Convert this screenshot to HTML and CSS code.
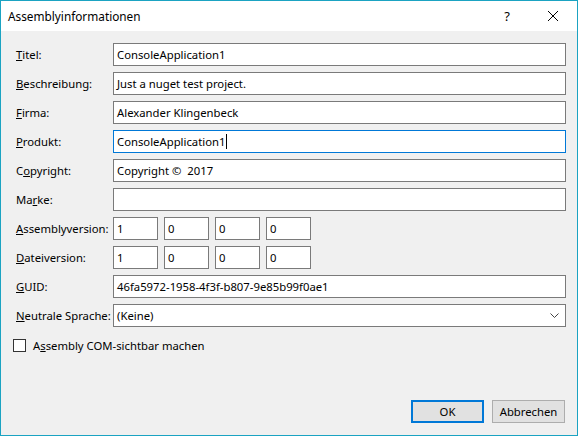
FILE: index.html
```html
<!DOCTYPE html>
<html>
<head>
<meta charset="utf-8">
<link rel="stylesheet" href="styles.css">
</head>
<body>
<div class="window">
  <div class="titlebar">
    <span class="title">Assemblyinformationen</span>
    <span class="tb-btn help">?</span>
    <span class="tb-btn close">
      <svg width="12" height="12" viewBox="0 0 12 12"><path d="M1 1 L11 11 M11 1 L1 11" stroke="#000" stroke-width="1" fill="none"/></svg>
    </span>
  </div>
  <div class="content">
    <div class="form">
      <label class="lbl"><u>T</u>itel:</label>
      <div class="field">ConsoleApplication1</div>
      <label class="lbl"><u>B</u>eschreibung:</label>
      <div class="field">Just a nuget test project.</div>
      <label class="lbl"><u>F</u>irma:</label>
      <div class="field">Alexander Klingenbeck</div>
      <label class="lbl"><u>P</u>rodukt:</label>
      <div class="field focus">ConsoleApplication1<span class="caret"></span></div>
      <label class="lbl">C<u>o</u>pyright:</label>
      <div class="field">Copyright ©&nbsp; 2017</div>
      <label class="lbl">Ma<u>r</u>ke:</label>
      <div class="field"></div>
      <label class="lbl"><u>A</u>ssemblyversion:</label>
      <div class="versions">
        <div class="field v">1</div><div class="field v">0</div><div class="field v">0</div><div class="field v">0</div>
      </div>
      <label class="lbl"><u>D</u>ateiversion:</label>
      <div class="versions">
        <div class="field v">1</div><div class="field v">0</div><div class="field v">0</div><div class="field v">0</div>
      </div>
      <label class="lbl"><u>G</u>UID:</label>
      <div class="field">46fa5972-1958-4f3f-b807-9e85b99f0ae1</div>
      <label class="lbl"><u>N</u>eutrale Sprache:</label>
      <div class="field combo"><span>(Keine)</span>
        <svg class="chev" width="9" height="5" viewBox="0 0 9 5"><path d="M0.5 0.5 L4.5 4.5 L8.5 0.5" stroke="#444" stroke-width="1" fill="none"/></svg>
      </div>
    </div>
    <div class="check">
      <span class="box"></span>
      <span>A<u>s</u>sembly COM-sichtbar machen</span>
    </div>
    <div class="buttons">
      <div class="btn default">OK</div>
      <div class="btn">Abbrechen</div>
    </div>
  </div>
</div>
</body>
</html>
```

FILE: styles.css
```css
* { box-sizing: border-box; }
html, body { margin: 0; padding: 0; }
body {
  font-family: "Noto Sans", "Liberation Sans", sans-serif;
  font-size: 11.3px;
  color: #000;
}
.window {
  width: 578px;
  height: 436px;
  border: 1px solid #1ba3c2;
  background: #f0f0f0;
  display: flex;
  flex-direction: column;
}
.titlebar {
  height: 30px;
  background: #fff;
  display: flex;
  align-items: center;
  padding-left: 7px;
}
.title { flex: 1; font-size: 11.8px; }
.tb-btn {
  width: 46px;
  height: 30px;
  display: flex;
  align-items: center;
  justify-content: center;
}
.help { font-size: 13px; }
.close { width: 46px; margin-right: 1px; }
.content {
  flex: 1;
  display: flex;
  flex-direction: column;
  padding: 12px 11px 12px 12px;
}
.form {
  display: grid;
  grid-template-columns: 100px 453px;
  grid-auto-rows: 23px;
  row-gap: 6px;
}
.lbl {
  display: flex;
  align-items: center;
  padding-left: 3px;
  white-space: nowrap;
}
.field {
  height: 23px;
  border: 1px solid #7a7a7a;
  background: #fff;
  padding: 0 3px;
  display: flex;
  align-items: center;
  white-space: nowrap;
}
.field.focus { border-color: #0078d7; }
.caret {
  display: inline-block;
  width: 1px;
  height: 15px;
  background: #000;
  margin-left: 1px;
}
.versions {
  display: flex;
  gap: 6px;
}
.field.v { width: 45px; }
.combo { justify-content: space-between; padding-right: 6px; }
.chev { display: block; }
.check {
  display: flex;
  align-items: center;
  gap: 7px;
  margin-top: 11px;
  margin-left: 0px;
}
.box {
  width: 13px;
  height: 13px;
  border: 1px solid #333;
  background: #fff;
}
.buttons {
  margin-top: auto;
  display: flex;
  justify-content: flex-end;
  gap: 8px;
  padding-right: 1px;
}
.btn {
  width: 73px;
  height: 23px;
  background: #e1e1e1;
  border: 1px solid #adadad;
  display: flex;
  align-items: center;
  justify-content: center;
}
.btn.default { border: 2px solid #0078d7; }
```
